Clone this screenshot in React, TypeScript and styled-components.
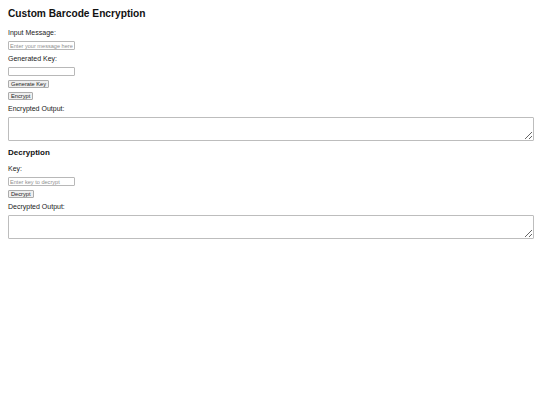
import React from 'react'
import styled, { createGlobalStyle } from 'styled-components'

const GlobalStyle = createGlobalStyle`
  html, body {
    margin: 0;
    padding: 0;
    background: #ffffff;
  }
  body {
    font-family: 'Liberation Sans', Arial, sans-serif;
    color: #111111;
  }
`

const Page = styled.main`
  display: flex;
  flex-direction: column;
  align-items: flex-start;
  gap: 4px;
  padding: 8px;
`

const Title = styled.h1`
  margin: 0 0 4px;
  font-size: 10.2px;
  line-height: 12px;
  font-weight: 700;
`

const SectionTitle = styled.h2`
  margin: 3px 0 2px;
  font-size: 8px;
  line-height: 10px;
  font-weight: 700;
`

const Label = styled.label`
  display: block;
  font-size: 7px;
  line-height: 9px;
  color: #1a1a1a;
`

const TextInput = styled.input`
  box-sizing: border-box;
  width: 67px;
  height: 9px;
  margin: 0;
  padding: 0 1px;
  border: 1px solid #b8b8b8;
  border-radius: 1px;
  font-family: inherit;
  font-size: 5.6px;
  outline: none;
  &::placeholder {
    color: #8f8f8f;
  }
`

const Button = styled.button`
  box-sizing: border-box;
  height: 8px;
  margin: 0;
  padding: 0 2px;
  border: 1px solid #ababab;
  border-radius: 1px;
  background: #efefef;
  color: #222222;
  font-family: inherit;
  font-size: 5.7px;
  line-height: 6px;
  cursor: pointer;
`

const Output = styled.textarea`
  box-sizing: border-box;
  width: 526px;
  height: 24px;
  margin: 0;
  padding: 1px 2px;
  border: 1px solid #bdbdbd;
  border-radius: 1px;
  font-family: inherit;
  font-size: 6px;
  outline: none;
`

const App = () => {
  return (
    <>
      <GlobalStyle />
      <Page>
        <Title>Custom Barcode Encryption</Title>
        <Label htmlFor='message'>Input Message:</Label>
        <TextInput id='message' type='text' placeholder='Enter your message here' />
        <Label htmlFor='genkey'>Generated Key:</Label>
        <TextInput id='genkey' type='text' readOnly />
        <Button type='button'>Generate Key</Button>
        <Button type='button'>Encrypt</Button>
        <Label htmlFor='encrypted'>Encrypted Output:</Label>
        <Output id='encrypted' readOnly />

        <SectionTitle>Decryption</SectionTitle>
        <Label htmlFor='deckey'>Key:</Label>
        <TextInput id='deckey' type='text' placeholder='Enter key to decrypt' />
        <Button type='button'>Decrypt</Button>
        <Label htmlFor='decrypted'>Decrypted Output:</Label>
        <Output id='decrypted' readOnly />
      </Page>
    </>
  )
}

export default App
